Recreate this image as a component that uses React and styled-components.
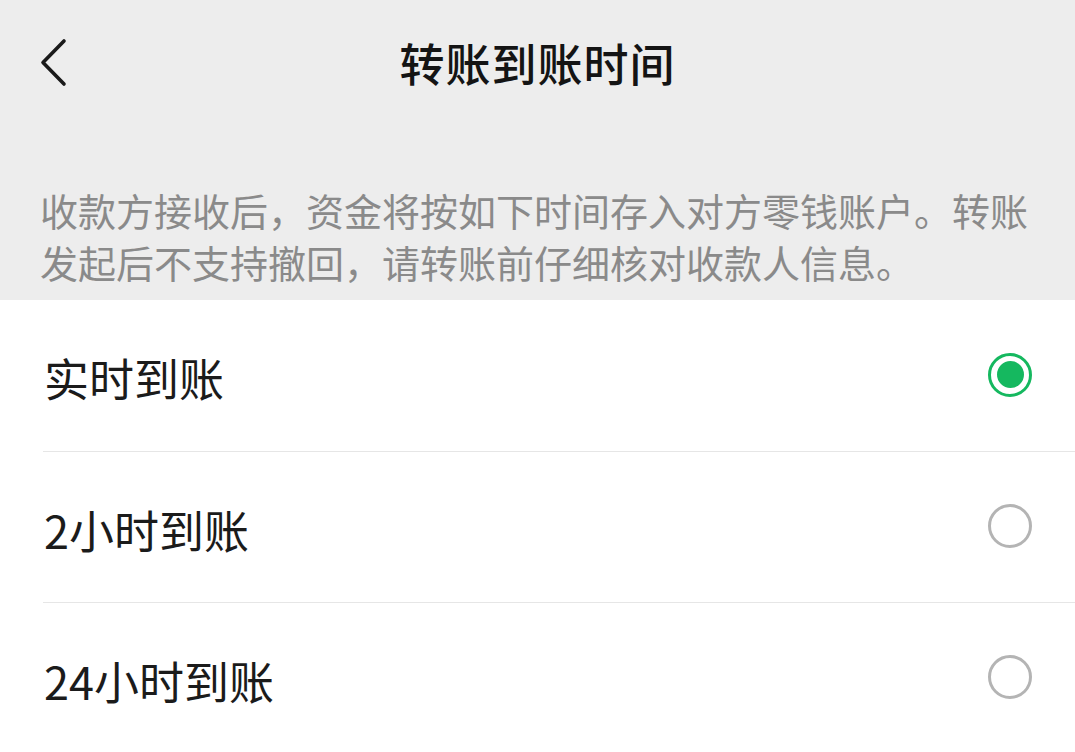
import React, { useState } from "react";
import styled, { createGlobalStyle } from "styled-components";

const Global = createGlobalStyle`
  html, body { margin: 0; padding: 0; background: #ffffff; }
  body { font-family: "Noto Sans CJK SC", "Noto Sans", sans-serif; -webkit-font-smoothing: antialiased; }
  * { box-sizing: border-box; }
`;

const Page = styled.div`
  width: 1075px;
  min-height: 752px;
  background: #ffffff;
`;

const Top = styled.div`
  background: #ededed;
`;

const NavBar = styled.div`
  height: 130px;
  display: grid;
  grid-template-columns: 120px 1fr 120px;
  align-items: center;
`;

const BackButton = styled.button`
  border: 0;
  background: transparent;
  padding: 0 0 0 38px;
  height: 60px;
  margin-top: -4px;
  display: flex;
  align-items: center;
  justify-self: start;
  cursor: pointer;
`;

const Title = styled.h1`
  margin: -5px 0 0 0;
  text-align: center;
  font-size: 45px;
  font-weight: 500;
  color: #141414;
  line-height: 1;
  letter-spacing: 1px;
`;

const Desc = styled.p`
  margin: 0;
  padding: 54px 40px 12px 40px;
  font-size: 38px;
  line-height: 52px;
  color: #8a8a8a;
`;

const List = styled.div`
  background: #ffffff;
`;

const Row = styled.label`
  height: 151px;
  display: flex;
  align-items: center;
  justify-content: space-between;
  padding: 4px 43px 0 44px;
  cursor: pointer;
  &:not(:first-child) {
    border-top: 1px solid #e6e6e6;
    margin-left: 43px;
    padding-left: 1px;
  }
`;

const Label = styled.span`
  font-size: 45px;
  color: #1b1b1b;
  line-height: 1;
`;

const Radio = styled.span`
  width: 44px;
  height: 44px;
  border-radius: 50%;
  border: 3px solid ${(p) => (p.$checked ? "#15b85f" : "#b4b4b4")};
  display: flex;
  align-items: center;
  justify-content: center;
  margin-top: -6px;
  &::after {
    content: "";
    width: 27px;
    height: 27px;
    border-radius: 50%;
    background: ${(p) => (p.$checked ? "#15b85f" : "transparent")};
  }
`;

const options = ["实时到账", "2小时到账", "24小时到账"];

export default function App() {
  const [sel, setSel] = useState(0);
  return (
    <Page>
      <Global />
      <Top>
        <NavBar>
          <BackButton aria-label="返回">
            <svg width="32" height="50" viewBox="0 0 32 50">
              <path d="M26 3 L5 24.5 L26 46" fill="none" stroke="#1a1a1a" strokeWidth="3.6" strokeLinecap="round" strokeLinejoin="round" />
            </svg>
          </BackButton>
          <Title>转账到账时间</Title>
          <span />
        </NavBar>
        <Desc>收款方接收后，资金将按如下时间存入对方零钱账户。转账发起后不支持撤回，请转账前仔细核对收款人信息。</Desc>
      </Top>
      <List>
        {options.map((o, i) => (
          <Row key={o} onClick={() => setSel(i)}>
            <Label>{o}</Label>
            <Radio $checked={sel === i} />
          </Row>
        ))}
      </List>
    </Page>
  );
}
